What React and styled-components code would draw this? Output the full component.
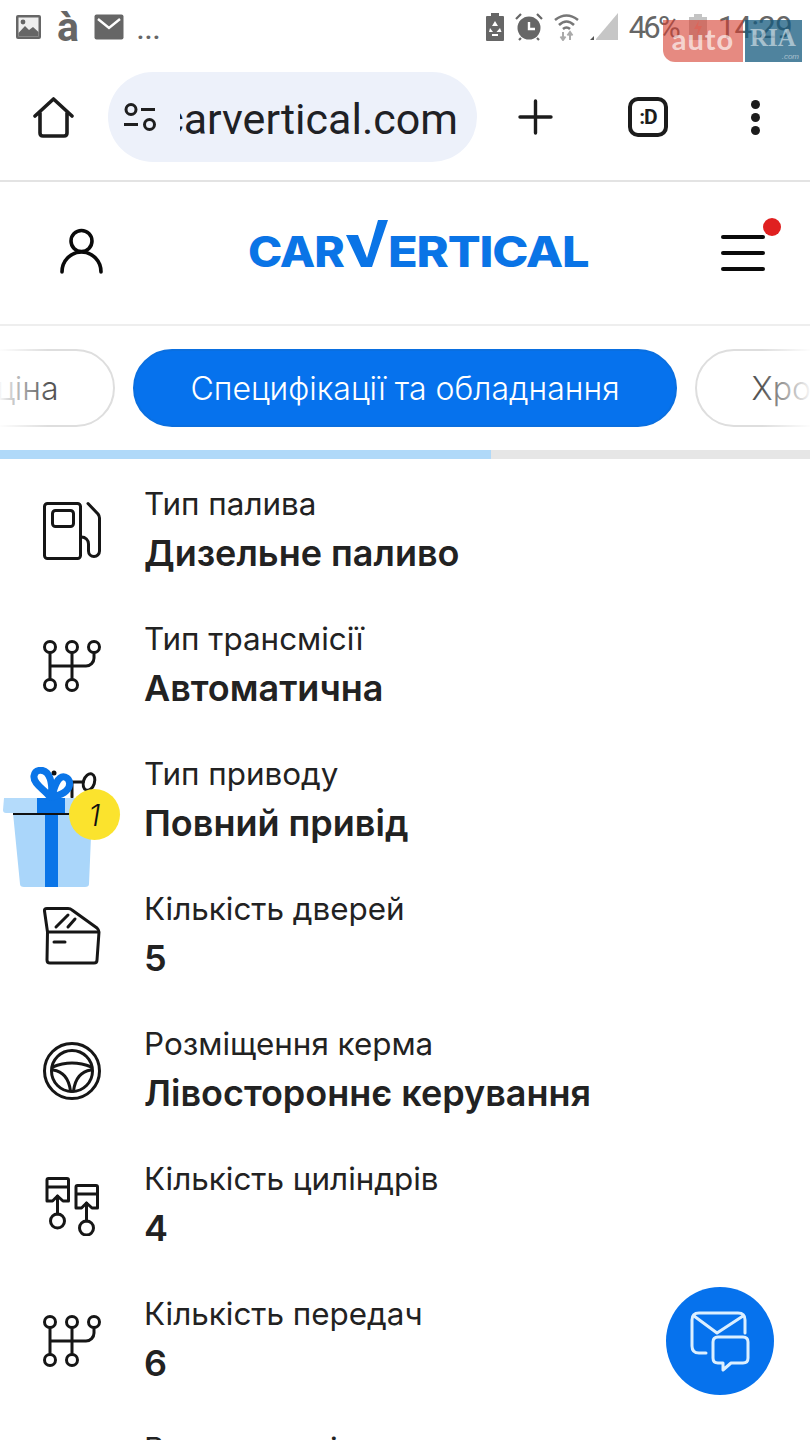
import React from "react";
import styled, { createGlobalStyle } from "styled-components";

const specs = [
  { icon: "fuel", label: "Тип палива", value: "Дизельне паливо" },
  { icon: "gear", label: "Тип трансмісії", value: "Автоматична" },
  { icon: "drive", label: "Тип приводу", value: "Повний привід" },
  { icon: "door", label: "Кількість дверей", value: "5" },
  { icon: "wheel", label: "Розміщення керма", value: "Лівостороннє керування" },
  { icon: "pistons", label: "Кількість циліндрів", value: "4" },
  { icon: "gear", label: "Кількість передач", value: "6" },
  { icon: "none", label: "Вантаж на вісь", value: "" },
];

function SpecIcon({ name }) {
  if (name === "none") return <IconBox />;
  return (
    <IconBox>
      <svg width="60" height="60" viewBox="0 0 60 60" fill="none" stroke="#161616" strokeWidth="3" strokeLinecap="round" strokeLinejoin="round">
        {name === "fuel" && (
          <>
            <rect x="2.5" y="2.5" width="36" height="55" rx="3" />
            <rect x="10.5" y="9.5" width="21" height="16" rx="3" />
            <path d="M46 2.5 L56 13 Q57.5 15 57.5 17 V50 A5.5 5.5 0 0 1 46.5 50 V43 A7 7 0 0 0 39.5 36" />
          </>
        )}
        {name === "gear" && (
          <>
            <circle cx="8" cy="11" r="5.5" />
            <circle cx="30" cy="11" r="5.5" />
            <circle cx="52" cy="11" r="5.5" />
            <circle cx="8" cy="49" r="5.5" />
            <circle cx="30" cy="49" r="5.5" />
            <path d="M8 16.5 V43.5 M30 16.5 V43.5 M8 30 H44 A8 8 0 0 0 52 22 V16.5" />
          </>
        )}
        {name === "drive" && (
          <>
            <ellipse cx="47" cy="11" rx="5.5" ry="8.5" transform="rotate(18 47 11)" />
            <path d="M29 11 H41 M30 11 V26" />
          </>
        )}
        {name === "door" && (
          <>
            <path d="M2.5 5 Q2 2.5 5 2.5 H26 Q28.5 2.5 30 4 L55 22 Q57 24 57 26 L55 54 Q55 57 52 57 H8 Q5 57 5 54 L5.5 26 Z" />
            <path d="M6 26 H56 M14 21 L26 9 M26 21 L33 13 M12 36 H23" />
          </>
        )}
        {name === "wheel" && (
          <>
            <circle cx="30" cy="30" r="27.5" />
            <circle cx="30" cy="30" r="20.5" />
            <path d="M10.5 26 Q30 18 49.5 26 M11 29 Q26 31 28.5 50 M49 29 Q34 31 31.5 50" />
          </>
        )}
        {name === "pistons" && (
          <>
            <Piston x={0} y={0} />
            <Piston x={29} y={7} />
          </>
        )}
      </svg>
    </IconBox>
  );
}

function Piston({ x, y }) {
  return (
    <g transform={`translate(${x} ${y})`}>
      <path d="M5 4 Q5 2.5 6.5 2.5 H25 Q26.5 2.5 26.5 4 V25 H21 L15.5 20 L10.5 25 H5 Z M5 11 H26.5" />
      <path d="M15.5 20 V38" />
      <circle cx="15.5" cy="45" r="7" />
    </g>
  );
}

function App() {
  return (
    <Page>
      <GlobalStyle />
      <StatusBar>
        <StatusGroup>
          <svg width="27" height="26" viewBox="0 0 27 26">
            <rect x="1" y="1" width="25" height="24" rx="2" fill="#666" />
            <rect x="3.5" y="3.5" width="20" height="19" fill="#eee" />
            <circle cx="8" cy="8" r="2.4" fill="#666" />
            <path d="M3.5 19 L10 12 L14 16 L18 13 L23.5 18 V22.5 H3.5 Z" fill="#666" />
          </svg>
          <StatusGlyph>à</StatusGlyph>
          <svg width="30" height="26" viewBox="0 0 30 26">
            <rect x="0.5" y="0.5" width="29" height="25" rx="2" fill="#666" />
            <path d="M4 5 L15 14 L26 5" fill="none" stroke="#fff" strokeWidth="2.4" />
          </svg>
          <Ellipsis>...</Ellipsis>
        </StatusGroup>
        <StatusGroup $right>
          <svg width="18" height="28" viewBox="0 0 18 28">
            <path d="M5 0 H13 V3 H17 Q18 3 18 4 V27 Q18 28 17 28 H1 Q0 28 0 27 V4 Q0 3 1 3 H5 Z" fill="#666" />
            <path d="M9 8 L12 13 H6 Z M4 15 L7 19 H3 Z M14 15 L15.5 19 H10.5 Z M6 21 H12 V23 H6 Z" fill="#fff" />
          </svg>
          <svg width="28" height="28" viewBox="0 0 28 28">
            <path d="M1 6 L6 1 M27 6 L22 1 M6 25 L4 27 M22 25 L24 27" stroke="#666" strokeWidth="2.2" />
            <circle cx="14" cy="15" r="11.5" fill="#666" />
            <path d="M14 9 V16 H20" stroke="#fff" strokeWidth="2.4" fill="none" />
          </svg>
          <svg width="25" height="28" viewBox="0 0 25 28" fill="none">
            <path d="M1 7 Q12.5 -2 24 7" stroke="#777" strokeWidth="2.6" />
            <path d="M5 12 Q12.5 5 20 12" stroke="#777" strokeWidth="2.6" />
            <path d="M9 16 Q12.5 13 16 16" stroke="#777" strokeWidth="2.6" />
            <path d="M9 19 V26 M6.5 23.5 L9 27 L11.5 23.5" stroke="#aaa" strokeWidth="2" />
            <path d="M16 27 V20 M13.5 22.5 L16 19 L18.5 22.5" stroke="#aaa" strokeWidth="2" />
          </svg>
          <svg width="28" height="28" viewBox="0 0 28 28">
            <path d="M6 26 L28 0 V27 H6 Z" fill="#c6c6c6" />
            <path d="M0 27 L4 23 V27 Z" fill="#555" />
          </svg>
          <StatusText $tight>46%</StatusText>
          <svg width="18" height="26" viewBox="0 0 18 26">
            <path d="M5 0 H13 V3 H18 V26 H0 V3 H5 Z" fill="#c4c4c4" />
            <path d="M10 6 L5 15 H9 L8 22 L13 12 H9 Z" fill="#e0a5a0" />
          </svg>
          <StatusText>14:29</StatusText>
        </StatusGroup>
        <Watermark>
          <WatermarkAuto>auto</WatermarkAuto>
          <WatermarkRia>
            RIA
            <small>.com</small>
          </WatermarkRia>
        </Watermark>
      </StatusBar>

      <Toolbar>
        <svg width="41" height="41" viewBox="0 0 41 41" fill="none" stroke="#1c1c1c" strokeWidth="3.6" strokeLinejoin="round" strokeLinecap="round">
          <path d="M2 19 L20.5 2 L39 19 M7 16 V36 Q7 39 10 39 H31 Q34 39 34 36 V16" />
        </svg>
        <AddressPill>
          <SiteSettings width="34" height="28" viewBox="0 0 34 28" fill="none" stroke="#1f1f1f" strokeWidth="3">
            <circle cx="8" cy="6.5" r="5" />
            <path d="M18 6.5 H32 M1 21.5 H15" />
            <circle cx="26.5" cy="21.5" r="5" />
          </SiteSettings>
          <UrlClip>
            <Url>carvertical.com</Url>
          </UrlClip>
        </AddressPill>
        <Actions>
          <svg width="35" height="36" viewBox="0 0 35 36" stroke="#1c1c1c" strokeWidth="3.4" strokeLinecap="round">
            <path d="M17.5 2 V34 M2 18 H33" />
          </svg>
          <TabCount>:D</TabCount>
          <MoreDots>
            <i />
            <i />
            <i />
          </MoreDots>
        </Actions>
      </Toolbar>

      <Header>
        <svg width="43" height="46" viewBox="0 0 43 46" fill="none" stroke="#0a0a0a" strokeWidth="3.6" strokeLinecap="round">
          <circle cx="21.5" cy="13" r="10.5" />
          <path d="M2 44 A19.5 20 0 0 1 41 44" />
        </svg>
        <Logo>
          <LogoWord $width={98} $stretch={1.1}>CAR</LogoWord>
          <svg width="42" height="47" viewBox="0 0 42 47">
            <path d="M0 15 H12 L21 38 L32 0 H42 L26 47 H15 Z" fill="#0a74e6" />
          </svg>
          <LogoWord $width={200} $stretch={1.16}>ERTICAL</LogoWord>
        </Logo>
        <MenuButton>
          <MenuLine />
          <MenuLine />
          <MenuLine />
          <MenuDot />
        </MenuButton>
      </Header>

      <TabRow>
        <TabSlot $side="left">
          <Tab>Ринкова ціна</Tab>
        </TabSlot>
        <Tab $active>Специфікації та обладнання</Tab>
        <TabSlot $side="right">
          <Tab>Хронологія</Tab>
        </TabSlot>
      </TabRow>
      <Progress>
        <ProgressFill />
      </Progress>

      <SpecList>
        {specs.map((spec) => (
          <SpecRow key={spec.label}>
            <SpecIcon name={spec.icon} />
            <div>
              <SpecLabel>{spec.label}</SpecLabel>
              <SpecValue>{spec.value}</SpecValue>
            </div>
          </SpecRow>
        ))}
      </SpecList>

      <Gift>
        <svg width="125" height="125" viewBox="0 0 125 125">
          <path d="M13 46 H92 L89 117 Q89 120 85 120 H24 Q20 120 20 117 Z" fill="#aad6fa" />
          <path d="M4 31 H92 V46 H6 Q3 46 3 43 Z" fill="#b4dbfb" />
          <rect x="45" y="46" width="13" height="74" fill="#0a75e8" />
          <rect x="37" y="31" width="28" height="16" fill="#0a75e8" />
          <circle cx="54" cy="6" r="2.5" fill="#111" />
          <path d="M50 30 C44 22 33 17 34 9 C35 2 43 2 47 6 C52 12 53 24 50 30 Z" fill="none" stroke="#0a75e8" strokeWidth="7" strokeLinejoin="round" />
          <path d="M52 30 C54 20 58 8 65 10 C71 12 71 20 66 24 C62 28 56 29 52 30 Z" fill="none" stroke="#0a75e8" strokeWidth="7" strokeLinejoin="round" />
          <path d="M13 47 H70" stroke="#111" strokeWidth="2" />
        </svg>
        <GiftBadge>1</GiftBadge>
      </Gift>

      <ChatButton>
        <svg width="108" height="108" viewBox="0 0 108 108" fill="none" stroke="#dcefff" strokeWidth="3" strokeLinecap="round" strokeLinejoin="round">
          <path d="M40 66 H33 Q26 66 26 59 V33 Q26 26 33 26 H72 Q79 26 79 33 V46" />
          <path d="M28 29 L51 46 L77 29" />
          <path d="M52 50 H77 Q82 50 82 55 V71 Q82 76 77 76 H65 L57 83 V76 H52 Q47 76 47 71 V55 Q47 50 52 50 Z" />
        </svg>
      </ChatButton>
    </Page>
  );
}

export default App;

const GlobalStyle = createGlobalStyle`
  html, body {
    margin: 0;
    padding: 0;
    background: #fff;
  }
  * {
    box-sizing: border-box;
  }
`;

const Page = styled.div`
  position: relative;
  width: 810px;
  height: 1440px;
  overflow: hidden;
  background: #fff;
  font-family: Inter, "Noto Sans", sans-serif;
  color: #1f1f1f;
`;

const StatusBar = styled.div`
  display: flex;
  justify-content: space-between;
  align-items: flex-start;
  height: 70px;
  padding: 13px 18px 0 15px;
`;

const StatusGroup = styled.div`
  display: flex;
  align-items: center;
  gap: ${(p) => (p.$right ? "11px" : "15px")};
  height: 28px;
`;

const StatusGlyph = styled.span`
  font: 700 41px Roboto, sans-serif;
  line-height: 26px;
  color: #666;
`;

const Ellipsis = styled.span`
  font: 700 24px Roboto, sans-serif;
  color: #666;
  letter-spacing: 1px;
  margin: 8px 0 0 -2px;
`;

const StatusText = styled.span`
  font: 400 31px Roboto, sans-serif;
  color: #666;
  letter-spacing: ${(p) => (p.$tight ? "-2.8px" : "-0.6px")};
`;

const Watermark = styled.div`
  position: absolute;
  top: 20px;
  left: 663px;
  display: flex;
  gap: 2px;
  height: 42px;
`;

const WatermarkAuto = styled.div`
  width: 80px;
  padding-top: 1px;
  border-bottom-left-radius: 12px;
  background: rgba(214, 60, 45, 0.6);
  color: rgba(255, 255, 255, 0.65);
  font: 700 29px Lato, sans-serif;
  text-align: center;
  letter-spacing: 1px;
`;

const WatermarkRia = styled.div`
  position: relative;
  width: 57px;
  padding: 4px 0 0 5px;
  background: rgba(20, 90, 125, 0.75);
  color: rgba(255, 255, 255, 0.5);
  font: 700 25px "Liberation Serif", serif;

  small {
    position: absolute;
    right: 3px;
    bottom: 1px;
    font: italic 400 8px "Liberation Sans", sans-serif;
  }
`;

const Toolbar = styled.div`
  display: flex;
  align-items: center;
  gap: 34px;
  height: 112px;
  padding: 0 0 16px 33px;
  border-bottom: 2px solid #e3e3e3;
`;

const AddressPill = styled.div`
  display: flex;
  align-items: center;
  gap: 23px;
  width: 369px;
  height: 90px;
  padding: 0 19px 0 15px;
  border-radius: 45px;
  background: #edf1fa;
`;

const SiteSettings = styled.svg`
  flex-shrink: 0;
`;

const UrlClip = styled.div`
  flex: 1;
  min-width: 0;
  display: flex;
  justify-content: flex-end;
  margin-top: 4px;
  overflow: hidden;
`;

const Url = styled.span`
  flex-shrink: 0;
  font: 400 43px Roboto, sans-serif;
  color: #1f2125;
`;

const Actions = styled.div`
  display: flex;
  align-items: center;
  margin-left: 7px;
`;

const TabCount = styled.div`
  display: flex;
  align-items: center;
  justify-content: center;
  width: 40px;
  height: 40px;
  margin: 0 83px 0 75px;
  border: 4px solid #1c1c1c;
  border-radius: 10px;
  font: 700 21px Roboto, sans-serif;
  letter-spacing: -1px;
  color: #1c1c1c;
`;

const MoreDots = styled.div`
  display: flex;
  flex-direction: column;
  gap: 4px;
  width: 9px;

  i {
    width: 9px;
    height: 9px;
    border-radius: 50%;
    background: #1c1c1c;
  }
`;

const Header = styled.div`
  display: flex;
  align-items: center;
  justify-content: space-between;
  height: 144px;
  padding: 0 29px 4px 60px;
  border-bottom: 2px solid #eee;
`;

const Logo = styled.div`
  display: flex;
  align-items: flex-end;
  margin: 0 0 16px 12px;
  height: 47px;
  color: #0a74e6;
  font: 800 42px/31px Inter, sans-serif;
`;

const LogoWord = styled.span`
  display: inline-block;
  width: ${(p) => p.$width}px;
  letter-spacing: -1px;
  white-space: nowrap;
  transform: scaleX(${(p) => p.$stretch});
  transform-origin: left bottom;
`;

const MenuButton = styled.div`
  position: relative;
  display: flex;
  flex-direction: column;
  gap: 12.5px;
  width: 60px;
  padding-top: 4px;
`;

const MenuLine = styled.span`
  width: 44px;
  height: 3.5px;
  border-radius: 2px;
  background: #0a0a0a;
`;

const MenuDot = styled.span`
  position: absolute;
  top: -13px;
  right: 0;
  width: 18px;
  height: 18px;
  border-radius: 50%;
  background: #e02020;
`;

const TabRow = styled.div`
  position: relative;
  display: grid;
  grid-template-columns: minmax(0, 1fr) auto minmax(0, 1fr);
  column-gap: 18px;
  height: 124px;
  padding: 23px 0;
  overflow: hidden;

  &::before,
  &::after {
    content: "";
    position: absolute;
    top: 0;
    bottom: 0;
    width: 48px;
  }
  &::before {
    left: 0;
    background: linear-gradient(to right, rgba(255, 255, 255, 0.95), rgba(255, 255, 255, 0));
  }
  &::after {
    right: 0;
    background: linear-gradient(to left, rgba(255, 255, 255, 0.95), rgba(255, 255, 255, 0));
  }
`;

const TabSlot = styled.div`
  display: flex;
  justify-content: ${(p) => (p.$side === "left" ? "flex-end" : "flex-start")};
`;

const Tab = styled.div`
  flex-shrink: 0;
  display: flex;
  align-items: center;
  height: 78px;
  padding: 0 55px;
  border: 2px solid ${(p) => (p.$active ? "#0a6fe0" : "#dedede")};
  border-radius: 39px;
  background: ${(p) => (p.$active ? "#0672ed" : "#fff")};
  color: ${(p) => (p.$active ? "#fff" : "#555")};
  font-size: 32px;
  font-weight: 300;
  white-space: nowrap;
`;

const Progress = styled.div`
  height: 9px;
  background: #e6e6e6;
`;

const ProgressFill = styled.div`
  width: 491px;
  height: 100%;
  background: #b0d9f9;
`;

const SpecList = styled.div`
  padding: 26px 0 0 42px;
`;

const SpecRow = styled.div`
  display: flex;
  gap: 42px;
  height: 135px;
`;

const IconBox = styled.div`
  flex-shrink: 0;
  width: 60px;
  height: 60px;
  margin-top: 16px;
`;

const SpecLabel = styled.div`
  font-size: 31.4px;
  line-height: 38px;
  font-weight: 400;
  color: #222;
`;

const SpecValue = styled.div`
  font-size: 36px;
  line-height: 60px;
  font-weight: 600;
  color: #222;
`;

const Gift = styled.div`
  position: absolute;
  top: 767px;
  left: 0;
  width: 125px;
  height: 125px;
`;

const GiftBadge = styled.div`
  position: absolute;
  top: 22px;
  left: 69px;
  display: flex;
  align-items: center;
  justify-content: center;
  width: 51px;
  height: 51px;
  border-radius: 50%;
  background: #fbe32d;
  color: #111;
  font: italic 300 30px Inter, sans-serif;
`;

const ChatButton = styled.div`
  position: absolute;
  top: 1287px;
  left: 666px;
  width: 108px;
  height: 108px;
  border-radius: 50%;
  background: #0672ed;
`;
